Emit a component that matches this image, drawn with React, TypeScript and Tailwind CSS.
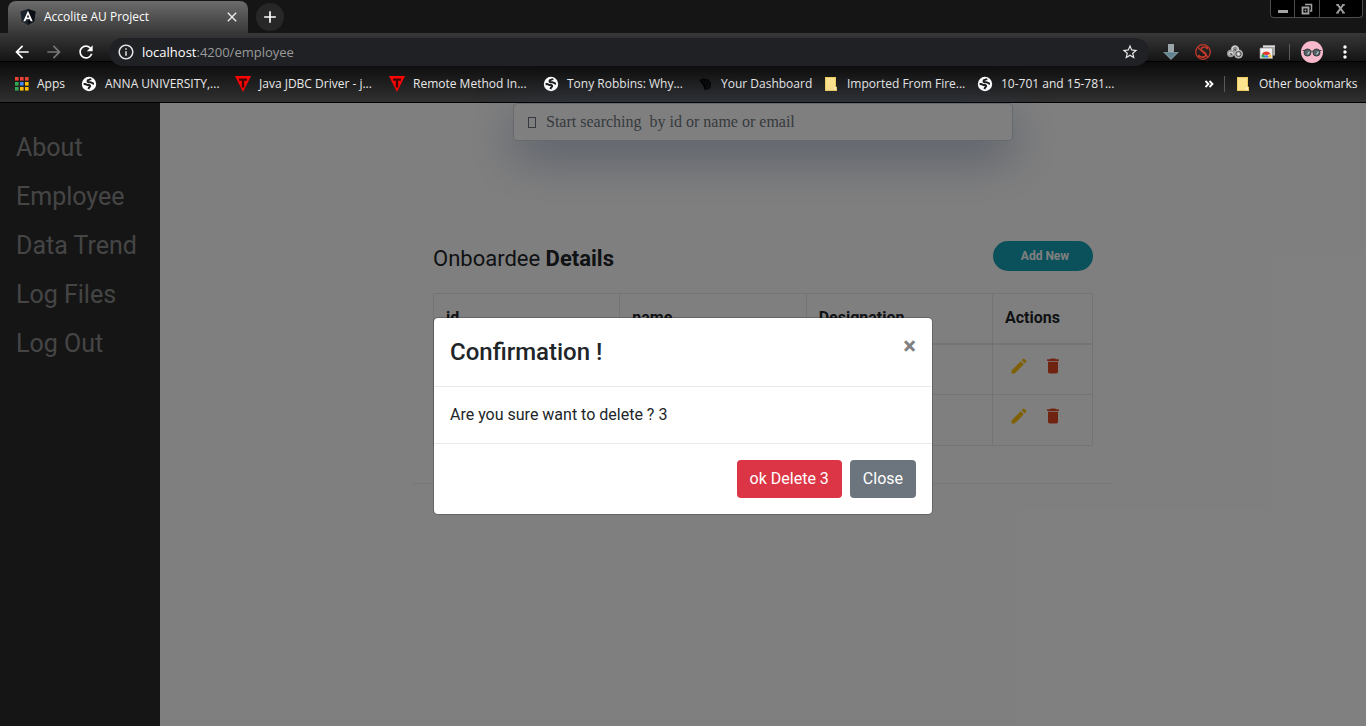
import { useState } from 'react';
import type { ReactNode } from 'react';
import {
  MdAdd,
  MdArrowBack,
  MdArrowForward,
  MdClose,
  MdDelete,
  MdEdit,
  MdInfoOutline,
  MdMoreVert,
  MdRefresh,
  MdStarBorder,
} from 'react-icons/md';

function AngularIcon() {
  return (
    <svg viewBox="0 0 16 16" className="size-4 shrink-0" aria-hidden="true">
      <path d="M8 0l7.5 2.6-1.2 9.7L8 16l-6.300-3.700L.5 2.600z" fill="#1a222c" />
      <path d="M8 0l7.500 2.600-1.200 9.700L8 16z" fill="#0a0e15" />
      <path d="M8 1.800L3.300 12.300h2.100l.8-2.100h3.600l.8 2.100h2.100zm0 3.700l1.200 3H6.800z" fill="#fff" fillRule="evenodd" />
    </svg>
  );
}

function AppsIcon() {
  const fills = ['#ea4335', '#ea4335', '#ea4335', '#34a853', '#4285f4', '#fbbc05', '#34a853', '#fbbc05', '#fbbc05'];
  return (
    <svg viewBox="0 0 16 16" className="size-4 shrink-0" aria-hidden="true">
      {fills.map((fill, i) => (
        <rect key={i} x={2 + (i % 3) * 5} y={1 + Math.floor(i / 3) * 5} width="3.6" height="3.6" fill={fill} />
      ))}
    </svg>
  );
}

function GlobeIcon() {
  return (
    <svg viewBox="0 0 16 16" className="size-4 shrink-0" aria-hidden="true">
      <circle cx="8" cy="8" r="7.200" fill="#fff" />
      <path
        d="M2.600 8.200c1.200-.3 2.200-.2 3.200.5 1 .8 2.700 0 3.300 1 .5.900-.4 1.400-1 1.800-.4.400-.4 1-.6 1.600M10 2.700c-.4.900-1.500 1-2.600 1.300-1.200.500-1.100 1.800 0 2.200 1.200.400 2.400-.2 3.400.500.900.7 1.200 1.200 2.200 1.100"
        fill="none"
        stroke="#1d1d1d"
        strokeWidth="2"
      />
    </svg>
  );
}

function TriangleIcon() {
  return (
    <svg viewBox="0 0 16 16" className="size-4 shrink-0" aria-hidden="true">
      <path d="M0 0h16L8 16z" fill="#fb0404" />
      <path d="M4 2.500h8v2.300H9.200v6.700H6.800V4.800H4z" fill="#3a0505" />
    </svg>
  );
}

function DashboardIcon() {
  return (
    <svg viewBox="0 0 16 16" className="size-4 shrink-0" aria-hidden="true">
      <path d="M2 4l4-1.500 5 .5 3 4-.5 5-5.500 2.500-2-5z" fill="#040404" />
      <path d="M5 4.500l4.500 3 .5 6M8.500 3.500l3 3 .5 5.500" fill="none" stroke="#1c1c1c" strokeWidth=".6" />
    </svg>
  );
}

function FolderIcon() {
  return (
    <svg viewBox="0 0 16 16" className="size-4 shrink-0" aria-hidden="true">
      <path d="M2 1h11v10h1v4H2z" fill="#ffe48f" />
      <path d="M2.500 1.500h10v9.500h1v3.500h-11z" fill="none" stroke="#f0cc60" strokeWidth="1" />
      <path d="M11 11h2v3h-2z" fill="#fdf0bd" />
    </svg>
  );
}

function DownloadIcon() {
  return (
    <svg viewBox="0 0 16 16" className="size-4" aria-hidden="true">
      <path d="M5 0h6v8h5l-8 8-8-8h5z" fill="#78909a" />
      <path d="M5 0h6v8H5z" fill="#9aa5aa" />
      <path d="M3 9h10l-5 5z" fill="#5f8290" />
    </svg>
  );
}

function BlockedIcon() {
  return (
    <svg viewBox="0 0 16 16" className="size-4" fill="none" stroke="#c0392b" aria-hidden="true">
      <circle cx="8" cy="8" r="7.300" strokeWidth="1.300" />
      <path d="M2.700 3.200l10.400 9.800" strokeWidth="1.200" />
      <path d="M12.300 4.800C11 2.300 6.500 2.300 6.200 5.100 6 7.500 11.600 8 11 11c-.6 2.700-5 2.800-7.200.6M12.300 2.600v2.600M3.700 13.400v-2.600" strokeWidth="1.600" />
    </svg>
  );
}

function SwirlIcon() {
  return (
    <svg viewBox="0 0 16 16" className="size-4" fill="none" aria-hidden="true">
      <circle cx="8" cy="5.500" r="4.200" fill="#8f8f8f" />
      <circle cx="3.700" cy="9.500" r="3.700" fill="#9d9d9d" />
      <circle cx="11.500" cy="10" r="4.500" fill="#b5b5b5" />
      <path d="M5.500 6.500a3 3 0 1 1 4.500 1M2 10.500a2 2 0 1 1 3.500 1" stroke="#dadada" strokeWidth="1.100" />
      <path d="M7.500 5.500l1.500 1M3.500 9.500l2 1.500" stroke="#303030" strokeWidth="1" />
      <circle cx="11.500" cy="10" r="2.600" stroke="#4a4a4a" strokeWidth="1" />
      <circle cx="11.500" cy="10" r="1" fill="#efefef" />
    </svg>
  );
}

function RemoteIcon() {
  return (
    <svg viewBox="0 0 16 16" className="size-4" aria-hidden="true">
      <path d="M4 1.500h12v10H4z" fill="#a9a9a9" />
      <path d="M4 1.500h12v1.500H4z" fill="#dcdcdc" />
      <path d="M1 4h12.500v10.500H1z" fill="#f1f1f1" stroke="#8d8d8d" strokeWidth=".7" />
      <path d="M2.500 13.500a4.800 4.800 0 0 1 2-4.800L6.500 13.500z" fill="#2ba24c" />
      <path d="M3.100 9.800a5 5 0 0 1 8.400 0L7.500 11.500z" fill="#e33b2e" />
      <path d="M11.400 9.700a4.800 4.800 0 0 1 .8 3.800H8z" fill="#fbc02d" />
      <path d="M5.200 13.500a2.200 2.200 0 0 1 4.400 0z" fill="#3b7ded" />
    </svg>
  );
}

function Avatar() {
  return (
    <svg viewBox="0 0 22 22" className="size-[22px]" aria-hidden="true">
      <circle cx="11" cy="11" r="11" fill="#f8b9cd" />
      <circle cx="6.500" cy="11.500" r="3.500" fill="#566266" stroke="#33383a" />
      <circle cx="15.500" cy="11.500" r="3.500" fill="#566266" stroke="#33383a" />
      <path d="M1.500 9.500h3M17.500 9.500h3M10 10.500q1-1 2 0" stroke="#3c4143" strokeWidth="1" fill="none" />
      <path d="M6.500 13.500l2-3M15.500 13.500l2-3" stroke="#b4c4c8" strokeWidth="1.300" />
    </svg>
  );
}

function WindowControls() {
  return (
    <div className="mr-[3px] flex h-[18px] divide-x divide-[#4c4c4c] rounded-b border border-t-0 border-[#4c4c4c] bg-black text-[#a3a3a3]">
      <button type="button" aria-label="Minimize" className="flex w-6 items-center justify-center">
        <svg viewBox="0 0 12 12" className="size-3">
          <path d="M1 7h10v3H1z" fill="currentColor" />
        </svg>
      </button>
      <button type="button" aria-label="Restore" className="flex w-[25px] items-center justify-center">
        <svg viewBox="0 0 12 12" className="size-3" fill="none" stroke="currentColor">
          <path d="M4 1.500h6.500V8H9" strokeWidth="1.500" />
          <path d="M1.500 4.500h6v6h-6z" strokeWidth="1.800" />
          <path d="M4 7h1v1H4z" />
        </svg>
      </button>
      <button type="button" aria-label="Close window" className="flex w-[42px] items-center justify-center">
        <svg viewBox="0 0 12 12" className="size-3" fill="none" stroke="currentColor">
          <path d="M2.500 1.500l6 8M8.500 1.500l-6 8" strokeWidth="2" />
          <path d="M1 1.800h3M7 1.800h3M1 9.800h3M7 9.800h3" strokeWidth="1.200" />
        </svg>
      </button>
    </div>
  );
}

function Bookmark({ icon, label, width }: { icon: ReactNode; label: string; width: string }) {
  return (
    <a href="#" className={`flex shrink-0 items-center gap-2 whitespace-nowrap ${width}`}>
      {icon}
      {label}
    </a>
  );
}

function BrowserFrame() {
  return (
    <header className="border-b border-black bg-[#151515] font-['Open_Sans',sans-serif] text-xs text-[#e8e8e8]">
      <div className="flex h-[33px] items-start justify-between">
        <div className="flex items-center gap-2 pl-2">
          <div className="mt-px flex h-8 w-[240px] items-center rounded-t-lg bg-linear-to-b from-[#6c6c6c] to-[#383838] pr-2 pl-3">
            <AngularIcon />
            <span className="ml-2 flex-1 text-white">Accolite AU Project</span>
            <button type="button" aria-label="Close tab" className="text-[#eeeeee]">
              <MdClose className="size-4" />
            </button>
          </div>
          <button type="button" aria-label="New tab" className="flex size-7 items-center justify-center rounded-full bg-[#272727] text-white">
            <MdAdd className="size-5" />
          </button>
        </div>
        <WindowControls />
      </div>

      <div className="bg-[linear-gradient(to_bottom,#383838_0px,#141414_28px,#000000_28px,#000000_29px,#0b0b0b_29px,#303030_69px)]">
        <div className="flex h-[38px] items-center">
          <div className="flex gap-3 pr-[13px] pl-3 text-white">
            <button type="button" aria-label="Back">
              <MdArrowBack className="size-5" />
            </button>
            <button type="button" aria-label="Forward" className="text-[#777777]">
              <MdArrowForward className="size-5" />
            </button>
            <button type="button" aria-label="Reload">
              <MdRefresh className="size-5" />
            </button>
          </div>
          <div className="flex h-7 flex-1 items-center rounded-full bg-[#202124] pr-2.5 pl-2">
            <MdInfoOutline className="size-[18px] text-[#e4e4e4]" />
            <span className="ml-[7px] flex-1 text-[13px] leading-5 text-[#9a9a9a]">
              <span className="text-white">localhost</span>:4200/employee
            </span>
            <button type="button" aria-label="Bookmark this page">
              <MdStarBorder className="size-[18px]" />
            </button>
          </div>
          <div className="flex items-center gap-4 px-3.5">
            <button type="button" aria-label="Downloads">
              <DownloadIcon />
            </button>
            <button type="button" aria-label="Script blocker">
              <BlockedIcon />
            </button>
            <button type="button" aria-label="Swirl extension">
              <SwirlIcon />
            </button>
            <button type="button" aria-label="Remote desktop">
              <RemoteIcon />
            </button>
          </div>
          <span className="h-4 border-l border-[#5a5a5a]" />
          <div className="flex items-center gap-3 pr-[11px] pl-[11px]">
            <button type="button" aria-label="Profile">
              <Avatar />
            </button>
            <button type="button" aria-label="Menu" className="text-white">
              <MdMoreVert className="size-5" />
            </button>
          </div>
        </div>

        <nav aria-label="Bookmarks" className="flex items-center pb-[5px] pl-[13px] leading-[26px]">
          <Bookmark icon={<AppsIcon />} label="Apps" width="w-[68px]" />
          <Bookmark icon={<GlobeIcon />} label="ANNA UNIVERSITY,..." width="w-[154px]" />
          <Bookmark icon={<TriangleIcon />} label="Java JDBC Driver - j..." width="w-[154px]" />
          <Bookmark icon={<TriangleIcon />} label="Remote Method In..." width="w-[154px]" />
          <Bookmark icon={<GlobeIcon />} label="Tony Robbins: Why..." width="w-[154px]" />
          <Bookmark icon={<DashboardIcon />} label="Your Dashboard" width="w-[126px]" />
          <Bookmark icon={<FolderIcon />} label="Imported From Fire..." width="w-[154px]" />
          <Bookmark icon={<GlobeIcon />} label="10-701 and 15-781..." width="w-[154px]" />
          <button type="button" aria-label="More bookmarks" className="ml-auto pr-2.5">
            <svg viewBox="0 0 10 10" className="size-2.5" fill="none" stroke="#fff" strokeWidth="1.800">
              <path d="M1.500 2L4.500 5l-3 3M5.500 2l3 3-3 3" />
            </svg>
          </button>
          <span className="h-4 border-l border-[#5a5a5a]" />
          <span className="pl-2.5">
            <Bookmark icon={<FolderIcon />} label="Other bookmarks" width="w-[131px]" />
          </span>
        </nav>
      </div>
    </header>
  );
}

const links = ['About', 'Employee', 'Data Trend', 'Log Files', 'Log Out'];
const rowIds = ['3', '4'];

function DetailsTable() {
  const cell = 'border border-[#e9e9e9] px-3 text-left';
  return (
    <table className="w-full table-fixed border-collapse">
      <thead>
        <tr className="h-[50px]">
          <th className={`${cell} border-b-2`}>id</th>
          <th className={`${cell} border-b-2`}>name</th>
          <th className={`${cell} border-b-2`}>Designation</th>
          <th className={`${cell} w-[100px] border-b-2`}>Actions</th>
        </tr>
      </thead>
      <tbody>
        {rowIds.map((id) => (
          <tr key={id} className="h-[51px]">
            <td className={cell} />
            <td className={cell} />
            <td className={cell} />
            <td className={`${cell} align-top`}>
              <div className="flex gap-3.5 pt-[11px] pl-1">
                <button type="button" aria-label={`Edit ${id}`} className="text-[#ffc107]">
                  <MdEdit className="size-5" />
                </button>
                <button type="button" aria-label={`Delete ${id}`} className="text-[#e34724]">
                  <MdDelete className="size-5" />
                </button>
              </div>
            </td>
          </tr>
        ))}
      </tbody>
    </table>
  );
}

function ConfirmDialog({ onClose }: { onClose: () => void }) {
  return (
    <div className="absolute inset-0 flex items-center justify-center bg-black/50 pt-[3px]">
      <div
        role="dialog"
        aria-labelledby="confirm-title"
        className="w-full max-w-[500px] rounded-[5px] border border-black/20 bg-white bg-clip-padding"
      >
        <div className="flex items-start justify-between border-b border-[#e9ecef] pl-4">
          <h4 id="confirm-title" className="py-4 text-2xl leading-9 font-medium">
            Confirmation !
          </h4>
          <button type="button" aria-label="Close dialog" onClick={onClose} className="p-4 text-2xl leading-6 font-bold text-[#808080]">
            ×
          </button>
        </div>
        <p className="p-4">Are you sure want to delete ? 3</p>
        <div className="flex justify-end gap-2 border-t border-[#e9ecef] p-4 text-white">
          <button type="button" onClick={onClose} className="rounded bg-[#dc3545] px-[13px] py-[7px]">
            ok Delete 3
          </button>
          <button type="button" onClick={onClose} className="rounded bg-[#6c757d] px-[13px] py-[7px]">
            Close
          </button>
        </div>
      </div>
    </div>
  );
}

export default function App() {
  const [open, setOpen] = useState(true);
  return (
    <div className="flex min-h-screen flex-col">
      <BrowserFrame />
      <div className="relative flex flex-1 bg-white font-['Roboto',sans-serif] text-base leading-6 text-[#212529]">
        <nav aria-label="Main" className="w-40 shrink-0 bg-[#2a2a2a] pt-5 text-[25px] leading-[37px] text-[#8a8a8a]">
          {links.map((link) => (
            <a key={link} href="#" className="block py-1.5 pl-4">
              {link}
            </a>
          ))}
        </nav>
        <main className="flex-1">
          <div className="mx-auto flex max-w-[500px] flex-col">
            <label className="flex h-[38px] items-center gap-2.5 rounded border border-[#ced4da] bg-white px-3.5 font-['Liberation_Serif',serif] text-[#495057] shadow-[0_16px_48px_rgba(40,70,130,0.4)]">
              <span className="h-[11px] w-2 border border-[#6c757d]" />
              <input
                type="text"
                aria-label="Search"
                placeholder={'Start searching\u00a0 by id or name or email'}
                className="flex-1 bg-transparent outline-none placeholder:text-[#6c757d]"
              />
            </label>
          </div>
          <section className="mx-auto mt-[82px] max-w-[700px] px-5 pt-[18px] pb-[37px] shadow-[0_1px_1px_rgba(0,0,0,0.05)]">
            <div className="flex items-start justify-between pb-[22px]">
              <h2 className="pt-1.5 text-[22px] leading-6">
                Onboardee <b>Details</b>
              </h2>
              <button type="button" className="h-[30px] w-[100px] rounded-full bg-[#17a2b8] pl-1 text-xs font-bold text-white">
                Add New
              </button>
            </div>
            <DetailsTable />
          </section>
        </main>
        {open && <ConfirmDialog onClose={() => setOpen(false)} />}
      </div>
    </div>
  );
}
